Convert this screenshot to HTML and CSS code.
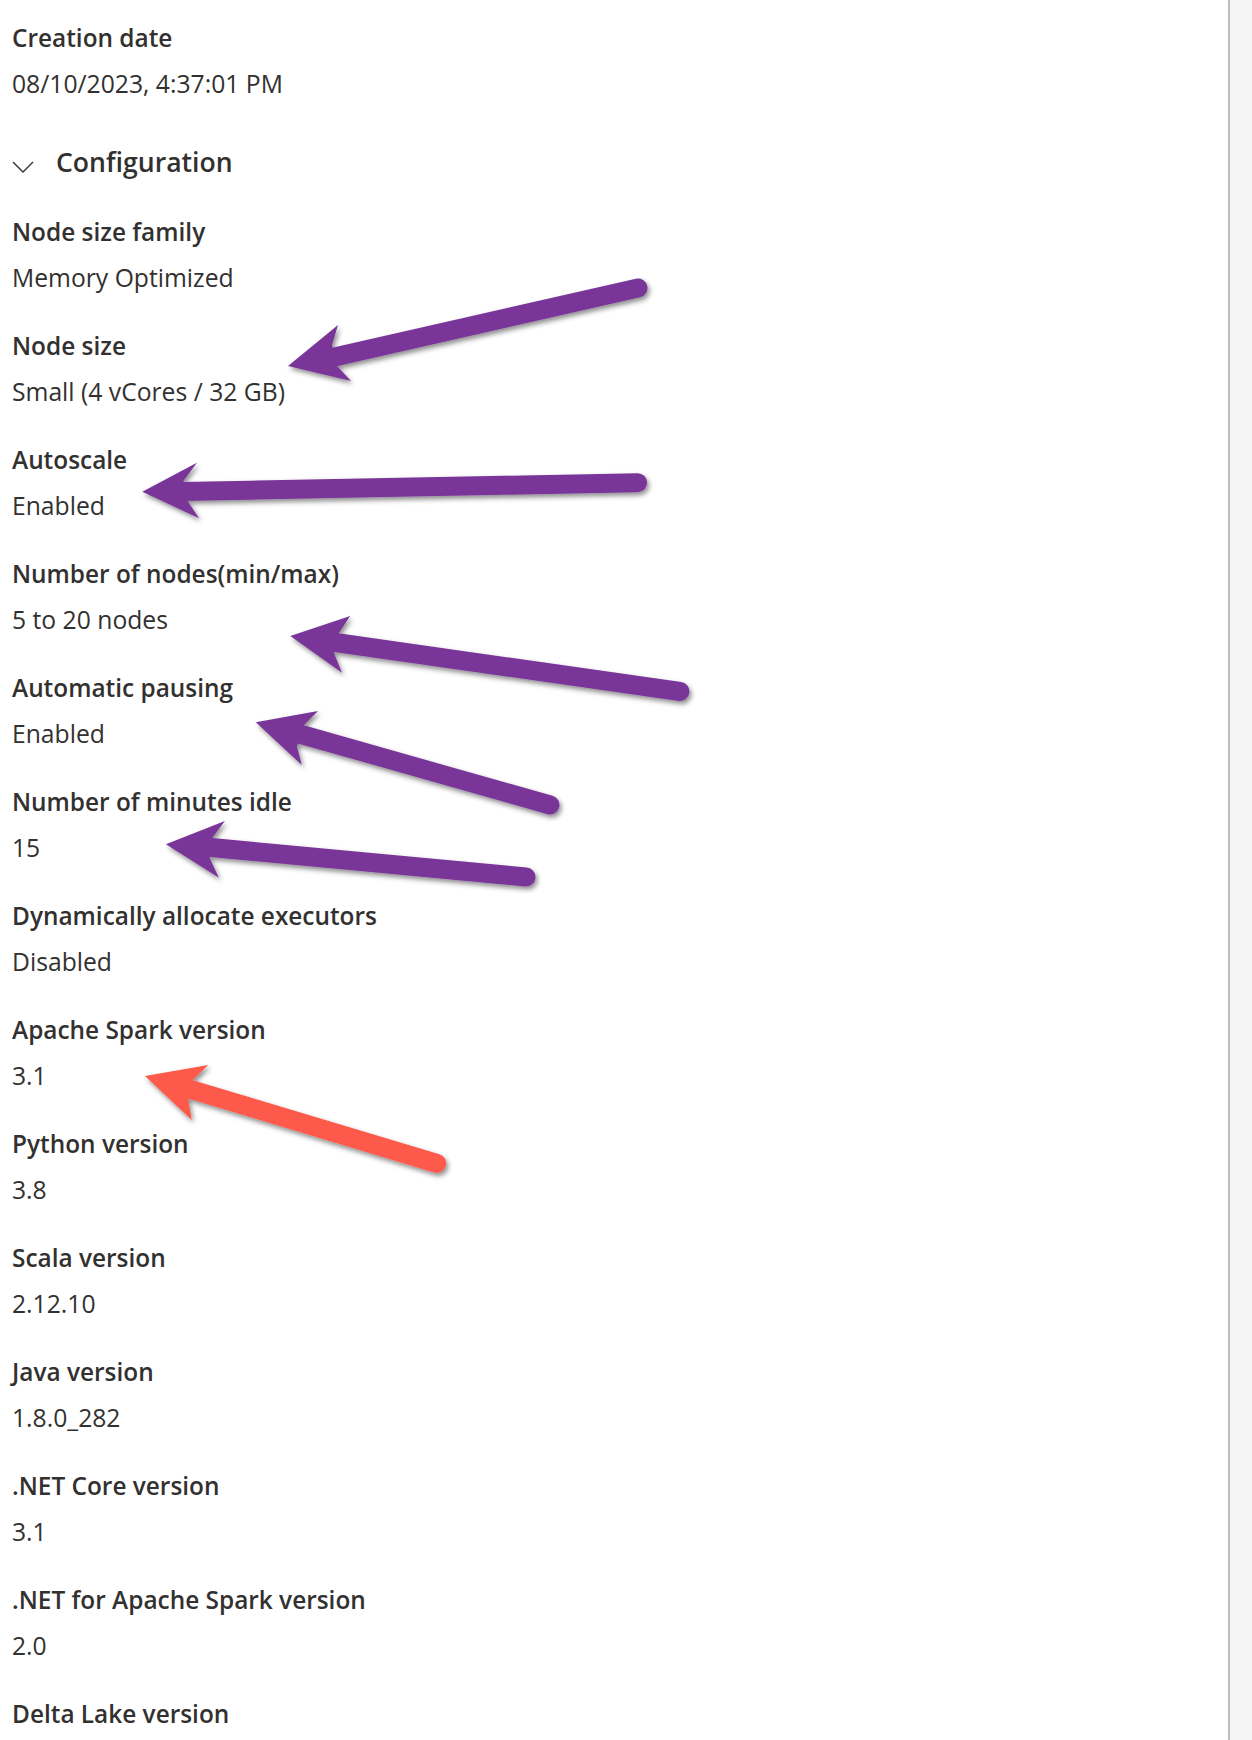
FILE: index.html
```html
<!DOCTYPE html>
<html lang="en">
<head>
<meta charset="utf-8">
<title>Configuration</title>
<link rel="stylesheet" href="styles.css">
</head>
<body>
<div class="page">
  <main class="panel">
    <div class="field">
      <div class="label">Creation date</div>
      <div class="value">08/10/2023, 4:37:01 PM</div>
    </div>
    <div class="section-head">
      <svg class="chevron" width="22" height="12" viewBox="0 0 22 12"><path d="M1 1 L11 11 L21 1" fill="none" stroke="#323130" stroke-width="1.4"/></svg>
      <span class="section-title">Configuration</span>
    </div>
    <div class="fields">
      <div class="field"><div class="label">Node size family</div><div class="value">Memory Optimized</div></div>
      <div class="field"><div class="label">Node size</div><div class="value">Small (4 vCores / 32 GB)</div></div>
      <div class="field"><div class="label">Autoscale</div><div class="value">Enabled</div></div>
      <div class="field"><div class="label">Number of nodes(min/max)</div><div class="value">5 to 20 nodes</div></div>
      <div class="field"><div class="label">Automatic pausing</div><div class="value">Enabled</div></div>
      <div class="field"><div class="label">Number of minutes idle</div><div class="value">15</div></div>
      <div class="field"><div class="label">Dynamically allocate executors</div><div class="value">Disabled</div></div>
      <div class="field"><div class="label">Apache Spark version</div><div class="value">3.1</div></div>
      <div class="field"><div class="label">Python version</div><div class="value">3.8</div></div>
      <div class="field"><div class="label">Scala version</div><div class="value">2.12.10</div></div>
      <div class="field"><div class="label">Java version</div><div class="value">1.8.0_282</div></div>
      <div class="field"><div class="label">.NET Core version</div><div class="value">3.1</div></div>
      <div class="field"><div class="label">.NET for Apache Spark version</div><div class="value">2.0</div></div>
      <div class="field"><div class="label">Delta Lake version</div></div>
    </div>
  </main>
  <aside class="rail"></aside>
</div>
<svg class="annotations" width="1252" height="1740" viewBox="0 0 1252 1740">
  <defs>
    <filter id="shadow" x="-10%" y="-30%" width="130%" height="170%">
      <feDropShadow dx="2" dy="3" stdDeviation="2.5" flood-color="#000" flood-opacity="0.45"/>
    </filter>
  </defs>
  <g class="arrow purple" filter="url(#shadow)">
    <line x1="638" y1="288" x2="330" y2="358"/>
    <polygon points="288,366 338,325 332,345 337,366 351,381"/>
  </g>
  <g class="arrow purple" filter="url(#shadow)">
    <line x1="637.6" y1="482.7" x2="182" y2="491.5"/>
    <polygon points="142.3,491.7 196.9,462.7 183.4,481 188,501.7 199.1,518.3"/>
  </g>
  <g class="arrow purple" filter="url(#shadow)">
    <line x1="680" y1="691.5" x2="332" y2="642"/>
    <polygon points="290.3,636 350.2,616 338.7,633.3 334,653.3 342,672.7"/>
  </g>
  <g class="arrow purple" filter="url(#shadow)">
    <line x1="550" y1="805" x2="296" y2="733"/>
    <polygon points="255.8,722.3 318,711 304,725 297,746.7 301.8,765"/>
  </g>
  <g class="arrow purple" filter="url(#shadow)">
    <line x1="526" y1="877" x2="206" y2="847"/>
    <polygon points="165.9,844.3 224.9,821 212,838.3 209.7,858.3 218.9,877.7"/>
  </g>
  <g class="arrow red" filter="url(#shadow)">
    <line x1="436.7" y1="1163.3" x2="186" y2="1088"/>
    <polygon points="145,1076 208.3,1065 192.7,1080 188.3,1100 191.7,1120"/>
  </g>
</svg>
</body>
</html>
```

FILE: styles.css
```css
* { box-sizing: border-box; }

html, body {
  margin: 0;
  padding: 0;
  background: #ffffff;
}

body {
  font-family: "Open Sans", "Noto Sans", "Liberation Sans", sans-serif;
  color: #323130;
  position: relative;
  width: 1252px;
  height: 1740px;
  overflow: hidden;
}

.page {
  display: flex;
  height: 1740px;
}

.panel {
  flex: 1;
  padding: 22px 0 0 12px;
  border-right: 2px solid #bebebe;
  display: flex;
  flex-direction: column;
}

.rail {
  width: 22px;
  background: #f5f5f5;
}

.field {
  display: flex;
  flex-direction: column;
  gap: 14px;
}

.fields {
  display: flex;
  flex-direction: column;
  gap: 36px;
}

.label {
  font-size: 24.4px;
  line-height: 32px;
  font-weight: 600;
}

.value {
  font-size: 24.7px;
  line-height: 32px;
  font-weight: 400;
}

.section-head {
  display: flex;
  align-items: center;
  margin: 44px 0 36px 0;
  height: 36px;
}

.chevron {
  margin: 10px 22px 0 0;
  flex: none;
}

.section-title {
  font-size: 26.6px;
  line-height: 36px;
  font-weight: 600;
}

.annotations {
  position: absolute;
  left: 0;
  top: 0;
  pointer-events: none;
}

.arrow line {
  stroke-width: 19;
  stroke-linecap: round;
}

.arrow.purple line { stroke: #7a3699; }
.arrow.purple polygon { fill: #7a3699; }
.arrow.red line { stroke: #fd5a4b; }
.arrow.red polygon { fill: #fd5a4b; }
```
